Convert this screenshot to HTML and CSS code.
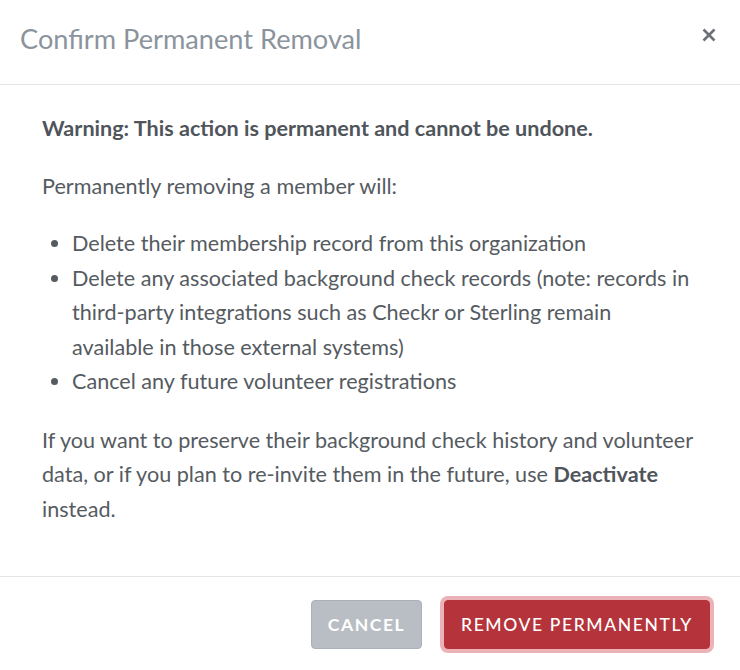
FILE: index.html
```html
<!DOCTYPE html>
<html>
<head>
<meta charset="utf-8">
<link rel="stylesheet" href="styles.css">
</head>
<body>
<div class="modal">
  <header class="modal-header">
    <h1 class="modal-title">Confirm Permanent Removal</h1>
    <button class="close" aria-label="Close">
      <svg width="14" height="14" viewBox="0 0 14 14"><path d="M1.5 1.5 L12.5 12.5 M12.5 1.5 L1.5 12.5" stroke="#6c7177" stroke-width="2.6" stroke-linecap="butt"/></svg>
    </button>
  </header>
  <section class="modal-body">
    <p class="warning">Warning: This action is permanent and cannot be undone.</p>
    <p>Permanently removing a member will:</p>
    <ul>
      <li>Delete their membership record from this organization</li>
      <li>Delete any associated background check records (note: records in third-party integrations such as Checkr or Sterling remain available in those external systems)</li>
      <li>Cancel any future volunteer registrations</li>
    </ul>
    <p>If you want to preserve their background check history and volunteer data, or if you plan to re-invite them in the future, use <strong>Deactivate</strong> instead.</p>
  </section>
  <footer class="modal-footer">
    <button class="btn btn-cancel">Cancel</button>
    <button class="btn btn-danger">Remove Permanently</button>
  </footer>
</div>
</body>
</html>
```
FILE: styles.css
```css
* { box-sizing: border-box; }
html, body { margin: 0; padding: 0; background: #ffffff; }
body { font-family: Lato, "Open Sans", sans-serif; color: #555b61; }
.modal { width: 740px; height: 670px; display: flex; flex-direction: column; }
.modal-header {
  height: 85px;
  border-bottom: 1px solid #e3e5e8;
  display: flex;
  align-items: center;
  justify-content: space-between;
  padding: 0 24px 6px 20px;
}
.modal-title { margin: 0; font-size: 27.2px; font-weight: 400; color: #8b949c; line-height: 1.2; }
.close { border: 0; background: none; padding: 0; width: 14px; height: 14px; display: flex; cursor: pointer; align-self: flex-start; margin-top: 28px; }
.modal-body { padding: 26px 42px 26px 42px; font-size: 21.6px; line-height: 34.5px; }
.modal-body p { margin: 0 0 23px; }
.modal-body p:last-child { margin-bottom: 24px; }
.warning { font-weight: 700; color: #4f555b; }
.modal-body strong { font-weight: 700; color: #4f555b; }
ul { margin: 0 0 24px; padding-left: 30px; }
.modal-footer {
  border-top: 1px solid #e3e5e8;
  display: flex;
  justify-content: flex-end;
  align-items: flex-start;
  gap: 22px;
  padding: 23px 30px 0 0;
  flex: 1;
}
.btn {
  font-family: Lato, sans-serif;
  font-size: 17.5px;
  text-transform: uppercase;
  letter-spacing: 1.6px;
  height: 49px;
  border-radius: 4px;
  color: #ffffff;
  cursor: pointer;
}
.btn-cancel {
  background: #b9bec4;
  border: 1px solid #abb1b8;
  font-weight: 700;
  width: 111px;
  padding: 0;
}
.btn-danger {
  background: #b5333b;
  border: 1px solid #b5333b;
  font-weight: 500;
  width: 266px;
  padding: 0;
  box-shadow: 0 0 0 4px #ebb3b7;
}
```
